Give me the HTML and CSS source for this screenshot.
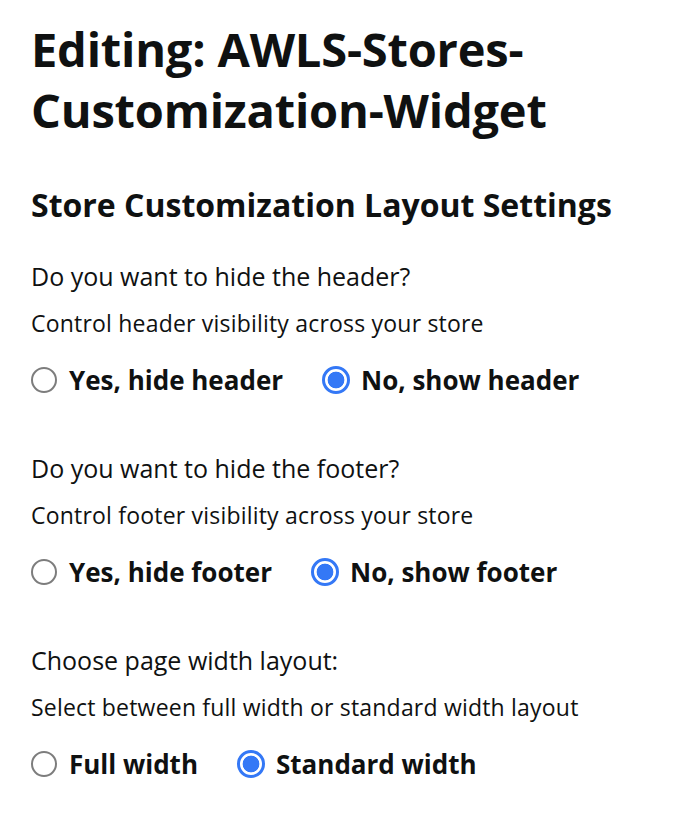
FILE: index.html
```html
<!DOCTYPE html>
<html>
<head>
<meta charset="utf-8">
<link rel="stylesheet" href="styles.css">
</head>
<body>
<main class="page">
  <h1 class="title">Editing: AWLS-Stores-Customization-Widget</h1>
  <h2 class="subtitle">Store Customization Layout Settings</h2>

  <section class="group">
    <p class="question">Do you want to hide the header?</p>
    <p class="hint">Control header visibility across your store</p>
    <div class="options">
      <label class="option"><span class="radio"></span><span class="label">Yes, hide header</span></label>
      <label class="option"><span class="radio checked"></span><span class="label">No, show header</span></label>
    </div>
  </section>

  <section class="group">
    <p class="question">Do you want to hide the footer?</p>
    <p class="hint">Control footer visibility across your store</p>
    <div class="options">
      <label class="option"><span class="radio"></span><span class="label">Yes, hide footer</span></label>
      <label class="option"><span class="radio checked"></span><span class="label">No, show footer</span></label>
    </div>
  </section>

  <section class="group">
    <p class="question">Choose page width layout:</p>
    <p class="hint">Select between full width or standard width layout</p>
    <div class="options">
      <label class="option"><span class="radio"></span><span class="label">Full width</span></label>
      <label class="option"><span class="radio checked"></span><span class="label">Standard width</span></label>
    </div>
  </section>
</main>
</body>
</html>
```

FILE: styles.css
```css
html, body {
  margin: 0;
  padding: 0;
  background: #ffffff;
}
body {
  font-family: "Open Sans", "Liberation Sans", sans-serif;
  color: #0f1111;
}
.page {
  padding: 19px 20px 0 31px;
}
.title {
  margin: 0;
  font-size: 47px;
  line-height: 61px;
  font-weight: 700;
  letter-spacing: -0.2px;
  width: 560px;
}
.subtitle {
  margin: 44px 0 35px 0;
  font-size: 32px;
  line-height: 40px;
  font-weight: 700;
}
.group {
  margin: 0;
}
.group + .group {
  margin-top: 55px;
}
.question {
  margin: 0;
  font-size: 25px;
  line-height: 32px;
}
.hint {
  margin: 16px 0 0 0;
  font-size: 23px;
  line-height: 30px;
  letter-spacing: 0.2px;
}
.options {
  display: flex;
  gap: 40px;
  margin-top: 25px;
  align-items: center;
}
.option {
  display: flex;
  align-items: center;
  gap: 12px;
}
.radio {
  box-sizing: border-box;
  width: 26px;
  height: 26px;
  border-radius: 50%;
  border: 2px solid #7d7d7d;
  background: #fff;
  display: inline-block;
  flex: none;
}
.radio.checked {
  width: 28px;
  height: 28px;
  margin: -1px;
  border: 3px solid #3478f6;
  background: radial-gradient(circle, #3478f6 0 8px, #ffffff 8.7px);
}
.label {
  font-size: 26px;
  line-height: 34px;
  font-weight: 700;
}
```
